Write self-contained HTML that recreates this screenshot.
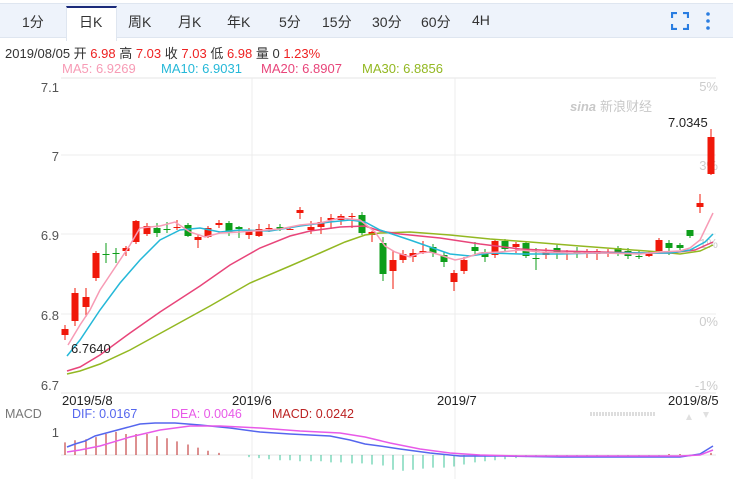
<!DOCTYPE html>
<html><head><meta charset="utf-8"><style>
*{margin:0;padding:0}
body{width:733px;height:479px;background:#fff;font-family:"Liberation Sans","Noto Sans CJK SC",sans-serif;overflow:hidden;position:relative}
.tabs{position:absolute;left:0;top:3px;width:733px;height:33px;background:#eef3fb;border-top:1px solid #dfe6f0;border-bottom:1px solid #dfe6f0}
.tab{position:absolute;top:8px;font-size:14px;color:#333}
.act{position:absolute;left:66px;top:2px;width:49px;height:33px;background:#fff;border-top:2px solid #1a2a7a;border-left:1px solid #dfe6f0;border-right:1px solid #dfe6f0}
.t{position:absolute;font-size:13px;white-space:nowrap}
</style></head><body>
<div class="tabs">
<div class="act"></div>
<span class="tab" style="left:22px">1分</span>
<span class="tab" style="left:79px">日K</span>
<span class="tab" style="left:128px">周K</span>
<span class="tab" style="left:178px">月K</span>
<span class="tab" style="left:227px">年K</span>
<span class="tab" style="left:279px">5分</span>
<span class="tab" style="left:322px">15分</span>
<span class="tab" style="left:372px">30分</span>
<span class="tab" style="left:421px">60分</span>
<span class="tab" style="left:472px">4H</span>
<svg style="position:absolute;left:671px;top:8px" width="18" height="18" viewBox="0 0 18 18" fill="none" stroke="#2a7de1" stroke-width="2.2"><path d="M1 6V1H6M12 1H17V6M17 12V17H12M6 17H1V12"/></svg>
<svg style="position:absolute;left:705px;top:7px" width="6" height="20"><circle cx="3" cy="3" r="1.8" fill="#2a7de1"/><circle cx="3" cy="10" r="1.8" fill="#2a7de1"/><circle cx="3" cy="17" r="1.8" fill="#2a7de1"/></svg>
</div>
<div class="t" style="left:5px;top:43px;font-size:13px;color:#333">2019/08/05 开 <span style="color:#e22">6.98</span> 高 <span style="color:#e22">7.03</span> 收 <span style="color:#e22">7.03</span> 低 <span style="color:#e22">6.98</span> 量 0 <span style="color:#e22">1.23%</span></div>
<div class="t" style="left:62px;top:61px;color:#f79bb5">MA5: 6.9269</div>
<div class="t" style="left:161px;top:61px;color:#25b8d8">MA10: 6.9031</div>
<div class="t" style="left:261px;top:61px;color:#e8457a">MA20: 6.8907</div>
<div class="t" style="left:362px;top:61px;color:#93b822">MA30: 6.8856</div>
<svg id="c" style="position:absolute;left:0;top:0" width="733" height="479" font-family="Liberation Sans, Noto Sans CJK SC, sans-serif">
<line x1="61" y1="78" x2="716" y2="78" stroke="#e6e6e6"/>
<line x1="61" y1="155" x2="716" y2="155" stroke="#ececec"/>
<line x1="61" y1="234" x2="716" y2="234" stroke="#ececec"/>
<line x1="61" y1="314" x2="716" y2="314" stroke="#ececec"/>
<line x1="61" y1="393" x2="716" y2="393" stroke="#e6e6e6"/>
<line x1="252" y1="78" x2="252" y2="479" stroke="#ececec"/>
<line x1="455" y1="78" x2="455" y2="479" stroke="#ececec"/>
<line x1="61" y1="455" x2="716" y2="455" stroke="#e6e6e6"/>
<g font-size="13" fill="#555" text-anchor="end">
<text x="59" y="92">7.1</text><text x="59" y="161">7</text><text x="59" y="240">6.9</text><text x="59" y="320">6.8</text><text x="59" y="390">6.7</text>
<text x="59" y="437">1</text>
</g>
<g font-size="13" fill="#ccc" text-anchor="end">
<text x="718" y="91">5%</text><text x="718" y="170">3%</text><text x="718" y="248">1%</text><text x="718" y="326">0%</text><text x="718" y="390">-1%</text>
</g>
<text x="570" y="111" font-size="13" fill="#c8c8c8" font-style="italic" font-weight="bold">sina</text>
<text x="600" y="111" font-size="13" fill="#c8c8c8">新浪财经</text>
<g font-size="13" fill="#222">
<text x="62" y="405">2019/5/8</text><text x="232" y="405">2019/6</text><text x="437" y="405">2019/7</text><text x="668" y="405">2019/8/5</text>
</g>
<g font-size="12.5">
<text x="5" y="418" fill="#777">MACD</text>
<text x="72" y="418" fill="#5566ee">DIF: 0.0167</text>
<text x="171" y="418" fill="#e85ae8">DEA: 0.0046</text>
<text x="272" y="418" fill="#b22">MACD: 0.0242</text>
</g>
<line x1="590" y1="414" x2="655" y2="414" stroke="#ddd" stroke-dasharray="2,1" stroke-width="4"/>
<path d="M686 420l3-6 3 6zM703 412l3 6 3-6z" fill="#e0e0e0"/>
<g id="cd"></g>
<g fill="none" stroke-width="1.5">
<polyline stroke="#93b822" points="67,374 80,371 100,364 130,350 170,328 210,306 250,283 290,266 320,253 345,242 365,235 380,233 410,232 450,235 490,239 530,242 580,246 620,249 660,252 680,254 700,251 713,245"/>
<polyline stroke="#e8457a" points="67,371 80,367 100,355 130,333 160,312 200,286 230,265 260,248 290,236 310,231 340,227 365,226 380,231 400,234 440,238 480,244 520,249 560,251 600,252 640,253 670,253 695,250 713,242"/>
<polyline stroke="#25b8d8" points="67,356 80,340 100,310 120,283 140,260 160,240 180,230 200,228 220,232 240,230 270,231 300,226 330,222 350,220 365,222 380,230 395,235 410,240 430,247 450,254 470,256 490,253 520,254 560,254 600,253 640,253 670,253 690,250 705,242 713,234"/>
<polyline stroke="#f79bb5" points="68,345 80,325 90,310 100,290 110,275 120,260 130,245 140,228 160,226 175,222 190,232 205,237 220,233 240,232 280,229 300,225 320,223 340,218 360,220 375,232 385,246 395,252 410,257 420,253 430,252 440,255 455,260 465,258 480,253 500,252 520,250 540,252 570,253 600,253 640,254 660,252 680,251 690,248 700,240 713,213"/>
<polyline stroke="#5566ee" points="67,447 75,444 85,441 95,436 110,432 125,428 140,424 155,423 175,423 200,425 230,428 260,432 290,434 330,436 350,440 365,444 380,446 400,449 430,453 460,456 500,456 560,457 620,457 680,457 700,454 713,446"/>
<polyline stroke="#e85ae8" points="67,452 80,450 100,446 130,437 160,430 190,426 220,426 260,428 300,431 340,433 365,437 390,443 420,449 450,453 480,455 520,456 600,456 680,456 700,455 713,450"/>
</g>
<text x="71" y="353" font-size="13" fill="#222">6.7640</text>
<text x="668" y="127" font-size="13" fill="#222">7.0345</text>
</svg>
<script>
var d=[[65,1,329,335,325,340],[75,1,293,321,288,326],[86,1,297,307,288,317],[96,1,253,278,251,281],[106,0,254,254,243,263],[116,0,253,253,248,263],[126,1,248,251,246,256],[136,1,221,242,220,244],[147,1,226,234,223,236],[157,0,228,233,223,237],[167,0,229,229,222,233],[177,1,227,228,220,230],[188,0,225,236,223,237],[198,1,237,240,235,248],[208,1,228,237,226,238],[219,1,223,225,220,228],[229,0,223,233,221,236],[239,0,227,229,226,238],[249,1,231,235,228,239],[259,1,229,236,224,237],[269,1,228,228,224,232],[280,0,227,229,224,231],[290,1,229,229,228,230],[300,1,210,213,207,219],[311,1,227,230,221,234],[321,1,222,227,217,234],[331,1,218,220,214,229],[341,1,216,220,214,225],[352,1,216,216,213,228],[362,0,215,233,212,235],[372,1,232,235,231,242],[383,0,243,274,237,281],[393,1,260,271,251,289],[403,1,254,260,250,263],[413,1,253,257,249,262],[423,1,251,253,241,254],[433,0,247,253,244,257],[444,0,255,262,252,267],[454,1,273,282,270,291],[464,1,260,271,257,274],[475,0,247,251,242,256],[485,0,252,257,249,262],[495,1,241,255,240,258],[505,0,241,249,239,252],[516,1,244,247,242,253],[526,0,243,256,242,258],[536,0,258,258,248,270],[546,1,252,255,248,259],[557,0,248,252,245,259],[567,1,253,253,250,260],[577,0,252,254,247,258],[587,1,252,253,249,258],[597,1,251,254,249,260],[608,1,252,252,249,257],[618,0,248,252,246,256],[628,0,251,256,248,259],[639,0,256,256,251,259],[649,1,253,256,251,257],[659,1,240,251,238,253],[669,0,243,248,240,255],[680,0,245,248,243,250],[690,0,230,236,230,238],[700,1,203,207,194,213],[711,1,137,174,129,175]];
var h=[12,14,15,17,20,22,20,20,20,18,16,13,10,7,4,2,0,0,-2,-3,-4,-5,-5,-6,-6,-6,-7,-7,-8,-8,-9,-10,-14,-15,-14,-13,-12,-12,-11,-9,-7,-6,-5,-4,-3,-2,-2,-2,-1,-1,-1,-1,-1,-1,-1,-1,-1,-1,-1,1,1,0,1,2,4,7,10,15];
var s='';
d.forEach(function(c,i){var col=c[1]?'#f0180a':'#0d9e1a';s+='<line x1="'+c[0]+'" x2="'+c[0]+'" y1="'+c[4]+'" y2="'+c[5]+'" stroke="'+col+'"/>';var hh=Math.max(c[3]-c[2],1);s+='<rect x="'+(c[0]-3.5)+'" y="'+c[2]+'" width="7" height="'+hh+'" fill="'+col+'"/>';
var v=h[i]||0;if(v){var y1=455,y2=455-v*1.05;s+='<line x1="'+c[0]+'" x2="'+c[0]+'" y1="'+Math.min(y1,y2)+'" y2="'+Math.max(y1,y2)+'" stroke="'+(v>0?'#b22':'#3cc49a')+'"/>';}});
document.getElementById('cd').innerHTML=s;
</script>
</body></html>
